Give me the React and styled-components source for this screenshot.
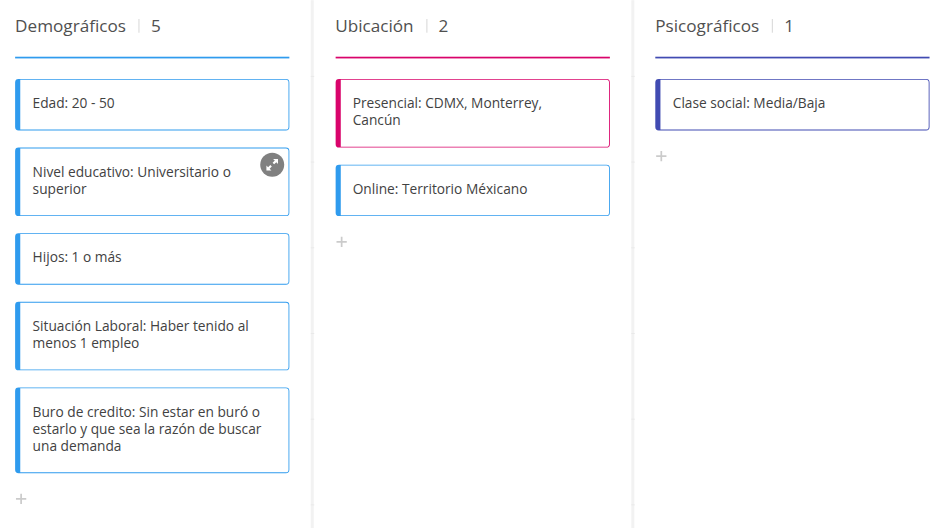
import React from "react";
import styled, { createGlobalStyle } from "styled-components";

const BLUE = "#2f9bee";
const PINK = "#d9046b";
const INDIGO = "#414bb2";

const GlobalStyle = createGlobalStyle`
  *, *::before, *::after { box-sizing: border-box; }
  body {
    margin: 0;
    background: #fff;
    color: #424242;
    font-family: "Open Sans", "Noto Sans", sans-serif;
    font-weight: 400;
  }
`;

const Viewport = styled.div`
  width: 946px;
  height: 528px;
  overflow: hidden;
`;

/* The board is laid out at full size and zoomed out to 6/7. */
const Board = styled.main`
  display: grid;
  grid-template-columns: 362px 373.5px 372px;
  width: 1107.5px;
  height: 618px;
  transform: translate(0.55px, 0.15px) scale(0.857);
  transform-origin: 0 0;
`;

const Column = styled.section`
  display: flex;
  flex-direction: column;
  padding-left: ${(p) => (p.$first ? 17 : 28.5)}px;
  background: ${(p) =>
    p.$first
      ? "none"
      : `linear-gradient(transparent 88px, #e9e9e9 88px, #e9e9e9 89px, transparent 89px) 0 0 / 3.5px 100px repeat-y,
         linear-gradient(#f2f2f2, #f2f2f2) 0 0 / 3.5px 100% no-repeat`};
`;

const Header = styled.header`
  display: flex;
  align-items: center;
  width: 320px;
  height: 68px;
  padding-bottom: 6.5px;
  border-bottom: 2px solid ${(p) => p.$color};
  margin-bottom: 24px;
  color: #505050;
  font-size: 20px;
  line-height: 28px;
`;

const Title = styled.h2`
  margin: 0;
  font: inherit;
`;

const Separator = styled.span`
  width: 1px;
  height: 16px;
  margin: 0 13.6px 0 14.6px;
  background: #d0d0d0;
`;

const Cards = styled.div`
  display: flex;
  flex-direction: column;
  gap: 20px;
`;

const Card = styled.article`
  position: relative;
  width: 320px;
  height: ${(p) => 40 + p.$lines * 20}px;
  padding: 17px 24px 0 14.4px;
  border: 1px solid ${(p) => p.$color};
  border-left-width: 6px;
  border-radius: 4px;
  font-size: 16px;
  line-height: 20px;
  white-space: pre-line;
`;

const ExpandButton = styled.button`
  position: absolute;
  top: 5px;
  right: 5px;
  display: flex;
  width: 28px;
  height: 28px;
  padding: 0;
  border: 0;
  border-radius: 50%;
  background: #808080;
`;

const AddButton = styled.button`
  display: flex;
  width: 14px;
  height: 14px;
  margin-top: 23px;
  padding: 0;
  border: 0;
  background: none;
`;

const columns = [
  {
    title: "Demográficos",
    color: BLUE,
    cards: [
      { lines: ["Edad: 20 - 50"] },
      { lines: ["Nivel educativo: Universitario o", "superior"], expand: true },
      { lines: ["Hijos: 1 o más"] },
      { lines: ["Situación Laboral: Haber tenido al", "menos 1 empleo"] },
      { lines: ["Buro de credito: Sin estar en buró o", "estarlo y que sea la razón de buscar", "una demanda"] },
    ],
  },
  {
    title: "Ubicación",
    color: PINK,
    cards: [
      { lines: ["Presencial: CDMX, Monterrey,", "Cancún"] },
      { lines: ["Online: Territorio Méxicano"], color: BLUE },
    ],
  },
  {
    title: "Psicográficos",
    color: INDIGO,
    cards: [{ lines: ["Clase social: Media/Baja"] }],
  },
];

const ExpandIcon = () => (
  <svg width="28" height="28" viewBox="0 0 24 24" fill="#fff">
    <path d="M12.8 6.2H17.8V11.2L16.1 9.5L13.9 11.6L12.4 10.1L14.6 7.9Z" />
    <path d="M11.2 17.8H6.2V12.8L7.9 14.5L10.1 12.4L11.6 13.9L9.4 16.1Z" />
  </svg>
);

const PlusIcon = () => (
  <svg width="14" height="14" viewBox="0 0 14 14" stroke="#cbcbcb" strokeWidth="2">
    <path d="M7 1V13M1 7H13" />
  </svg>
);

export default function App() {
  return (
    <>
      <GlobalStyle />
      <Viewport>
        <Board>
          {columns.map((column, i) => (
            <Column key={column.title} $first={i === 0}>
              <Header $color={column.color}>
                <Title>{column.title}</Title>
                <Separator />
                <span>{column.cards.length}</span>
              </Header>
              <Cards>
                {column.cards.map((card) => (
                  <Card key={card.lines[0]} $color={card.color || column.color} $lines={card.lines.length}>
                    {card.lines.join("\n")}
                    {card.expand && (
                      <ExpandButton aria-label="Expandir">
                        <ExpandIcon />
                      </ExpandButton>
                    )}
                  </Card>
                ))}
              </Cards>
              <AddButton aria-label="Agregar">
                <PlusIcon />
              </AddButton>
            </Column>
          ))}
        </Board>
      </Viewport>
    </>
  );
}
